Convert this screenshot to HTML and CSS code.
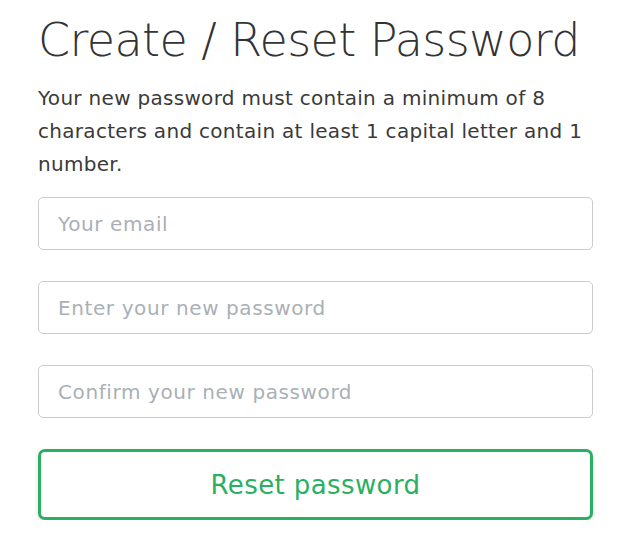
FILE: index.html
```html
<!DOCTYPE html>
<html lang="en">
<head>
<meta charset="utf-8">
<title>Create / Reset Password</title>
<link rel="stylesheet" href="styles.css">
</head>
<body>
<main class="page">
  <h1 class="title">Create / Reset Password</h1>
  <p class="intro">Your new password must contain a minimum of 8 characters and contain at least 1 capital letter and 1 number.</p>
  <form class="form">
    <input class="field" type="email" placeholder="Your email">
    <input class="field" type="password" placeholder="Enter your new password">
    <input class="field" type="password" placeholder="Confirm your new password">
    <button class="submit" type="button">Reset password</button>
  </form>
</main>
</body>
</html>
```
FILE: styles.css
```css
html, body {
  margin: 0;
  padding: 0;
  background: #fff;
}
body {
  font-family: "DejaVu Sans", sans-serif;
  color: #333;
}
.page {
  width: 555px;
  padding: 12px 0 0 38px;
}
.title {
  margin: 0;
  font-size: 46px;
  font-weight: 300;
  line-height: 56px;
  color: #333;
  letter-spacing: -0.6px;
}
.intro {
  margin: 14px 0 0;
  font-size: 20px;
  line-height: 33px;
  color: #3a3a3a;
  letter-spacing: 0.3px;
}
.form {
  display: flex;
  flex-direction: column;
  gap: 31px;
  margin-top: 16px;
}
.field {
  box-sizing: border-box;
  height: 53px;
  width: 100%;
  border: 1px solid #ccc;
  border-radius: 5px;
  padding: 0 19px;
  font-family: inherit;
  font-size: 20px;
  letter-spacing: 0.6px;
  color: #333;
  outline: none;
}
.field::placeholder {
  color: #aab0b6;
}
.submit {
  box-sizing: border-box;
  height: 71px;
  width: 100%;
  background: #fff;
  border: 3px solid #2baf62;
  border-radius: 7px;
  box-shadow: 0 2px 4px rgba(0,0,0,0.15);
  color: #2baf62;
  font-family: inherit;
  font-size: 26px;
  letter-spacing: 0.4px;
  cursor: pointer;
}
```
